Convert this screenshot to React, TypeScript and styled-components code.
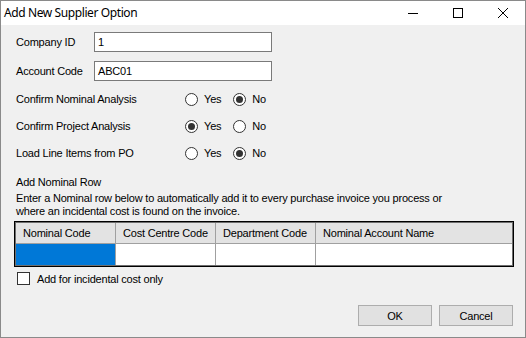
import React, { useState } from 'react';
import styled, { createGlobalStyle } from 'styled-components';

const GlobalStyle = createGlobalStyle`
    html, body {
        margin: 0;
        padding: 0;
        background: #f0f0f0;
    }
    * {
        box-sizing: border-box;
    }
`

const Window = styled.div`
    width: 526px;
    height: 338px;
    border: 1px solid #8a8a8a;
    background: #f0f0f0;
    display: flex;
    flex-direction: column;
    font-family: "Liberation Sans", Arial, sans-serif;
    font-size: 11px;
    letter-spacing: -0.2px;
    color: #000;
    overflow: hidden;
`

const TitleBar = styled.div`
    height: 24px;
    background: #fff;
    display: flex;
    align-items: center;
    justify-content: space-between;
    flex-shrink: 0;
`

const TitleText = styled.span`
    font-family: "Noto Sans", "Open Sans", sans-serif;
    font-size: 12px;
    letter-spacing: -0.4px;
    margin-left: 3px;
    margin-top: -1px;
`

const CaptionButtons = styled.div`
    display: flex;
    height: 100%;
`

const CaptionButton = styled.div`
    width: 45px;
    height: 100%;
    display: flex;
    align-items: center;
    justify-content: center;
`

const Body = styled.div`
    flex: 1;
    display: flex;
    flex-direction: column;
    padding: 7px 12px 0 15px;
`

const FieldRow = styled.div<{ $height: number; $gap: number }>`
    display: flex;
    align-items: center;
    height: ${p => p.$height}px;
    margin-bottom: ${p => p.$gap}px;
`

const Label = styled.span<{ $width: number }>`
    width: ${p => p.$width}px;
    flex-shrink: 0;
`

const TextBox = styled.div`
    width: 178px;
    height: 20px;
    background: #fff;
    border: 1px solid #7a7a7a;
    display: flex;
    align-items: center;
    padding-left: 3px;
`

const RadioOption = styled.label`
    display: flex;
    align-items: center;
    gap: 6px;
    margin-right: 12px;
    cursor: default;
`

const RadioCircle = styled.span<{ $checked: boolean }>`
    width: 13px;
    height: 13px;
    border-radius: 50%;
    border: 1px solid #333;
    background: #fff;
    display: flex;
    align-items: center;
    justify-content: center;
    &::after {
        content: "";
        width: 7px;
        height: 7px;
        border-radius: 50%;
        background: ${p => (p.$checked ? '#333' : 'transparent')};
    }
`

const SectionTitle = styled.div`
    margin-top: 5px;
    line-height: 13px;
`

const Description = styled.div`
    margin-top: 3px;
    line-height: 13px;
    width: 440px;
`

const Grid = styled.div`
    margin-top: 3px;
    margin-left: -2px;
    width: 500px;
    border: 1px solid #000;
    box-shadow: inset 0 0 0 1px #6e6e6e;
    padding: 1px;
    display: grid;
    grid-template-columns: 100px 100px 100px 1fr;
    grid-template-rows: 21px 21px;
`

const HeaderCell = styled.div<{ $last?: boolean }>`
    background: #e3e3e3;
    border-right: ${p => (p.$last ? 'none' : '1px solid #a0a0a0')};
    border-bottom: 1px solid #a0a0a0;
    display: flex;
    align-items: center;
    padding-left: 7px;
    white-space: nowrap;
`

const DataCell = styled.div<{ $selected?: boolean; $last?: boolean }>`
    background: ${p => (p.$selected ? '#0078d7' : '#fff')};
    border-right: ${p => (p.$last ? 'none' : '1px solid #a0a0a0')};
`

const CheckRow = styled.label`
    display: flex;
    align-items: center;
    gap: 7px;
    margin-top: 5px;
    margin-left: 1px;
    height: 13px;
`

const CheckBox = styled.span`
    width: 13px;
    height: 13px;
    border: 1px solid #333;
    background: #fff;
`

const Footer = styled.div`
    display: flex;
    justify-content: flex-end;
    gap: 7px;
    margin-top: 20px;
`

const Button = styled.button`
    width: 74px;
    height: 21px;
    background: #e1e1e1;
    border: 1px solid #adadad;
    font-family: "Liberation Sans", Arial, sans-serif;
    font-size: 11px;
    letter-spacing: -0.2px;
    color: #000;
    padding: 0;
`

type Choice = 'yes' | 'no'

const RadioRow = ({ label, value, onChange }: { label: string; value: Choice; onChange: (v: Choice) => void }) => (
    <FieldRow $height={18} $gap={9}>
        <Label $width={169}>{label}</Label>
        <RadioOption onClick={() => onChange('yes')}>
            <RadioCircle $checked={value === 'yes'} />
            Yes
        </RadioOption>
        <RadioOption onClick={() => onChange('no')}>
            <RadioCircle $checked={value === 'no'} />
            No
        </RadioOption>
    </FieldRow>
)

export default function App() {
    const [nominal, setNominal] = useState<Choice>('no')
    const [project, setProject] = useState<Choice>('yes')
    const [lineItems, setLineItems] = useState<Choice>('no')

    const columns = ['Nominal Code', 'Cost Centre Code', 'Department Code', 'Nominal Account Name']

    return (
        <>
            <GlobalStyle />
            <Window>
                <TitleBar>
                    <TitleText>Add New Supplier Option</TitleText>
                    <CaptionButtons>
                        <CaptionButton>
                            <svg width="10" height="10" viewBox="0 0 10 10">
                                <line x1="0" y1="5.5" x2="10" y2="5.5" stroke="#000" strokeWidth="1" />
                            </svg>
                        </CaptionButton>
                        <CaptionButton>
                            <svg width="10" height="10" viewBox="0 0 10 10">
                                <rect x="0.5" y="0.5" width="9" height="9" fill="none" stroke="#000" strokeWidth="1" />
                            </svg>
                        </CaptionButton>
                        <CaptionButton>
                            <svg width="10" height="10" viewBox="0 0 10 10">
                                <path d="M0 0 L10 10 M10 0 L0 10" stroke="#000" strokeWidth="1" />
                            </svg>
                        </CaptionButton>
                    </CaptionButtons>
                </TitleBar>
                <Body>
                    <FieldRow $height={20} $gap={9}>
                        <Label $width={78}>Company ID</Label>
                        <TextBox>1</TextBox>
                    </FieldRow>
                    <FieldRow $height={20} $gap={9}>
                        <Label $width={78}>Account Code</Label>
                        <TextBox>ABC01</TextBox>
                    </FieldRow>
                    <RadioRow label="Confirm Nominal Analysis" value={nominal} onChange={setNominal} />
                    <RadioRow label="Confirm Project Analysis" value={project} onChange={setProject} />
                    <RadioRow label="Load Line Items from PO" value={lineItems} onChange={setLineItems} />
                    <SectionTitle>Add Nominal Row</SectionTitle>
                    <Description>
                        Enter a Nominal row below to automatically add it to every purchase invoice you process or
                        where an incidental cost is found on the invoice.
                    </Description>
                    <Grid>
                        {columns.map((c, i) => (
                            <HeaderCell key={c} $last={i === columns.length - 1}>{c}</HeaderCell>
                        ))}
                        {columns.map((c, i) => (
                            <DataCell key={c} $selected={i === 0} $last={i === columns.length - 1} />
                        ))}
                    </Grid>
                    <CheckRow>
                        <CheckBox />
                        Add for incidental cost only
                    </CheckRow>
                    <Footer>
                        <Button>OK</Button>
                        <Button>Cancel</Button>
                    </Footer>
                </Body>
            </Window>
        </>
    )
}
